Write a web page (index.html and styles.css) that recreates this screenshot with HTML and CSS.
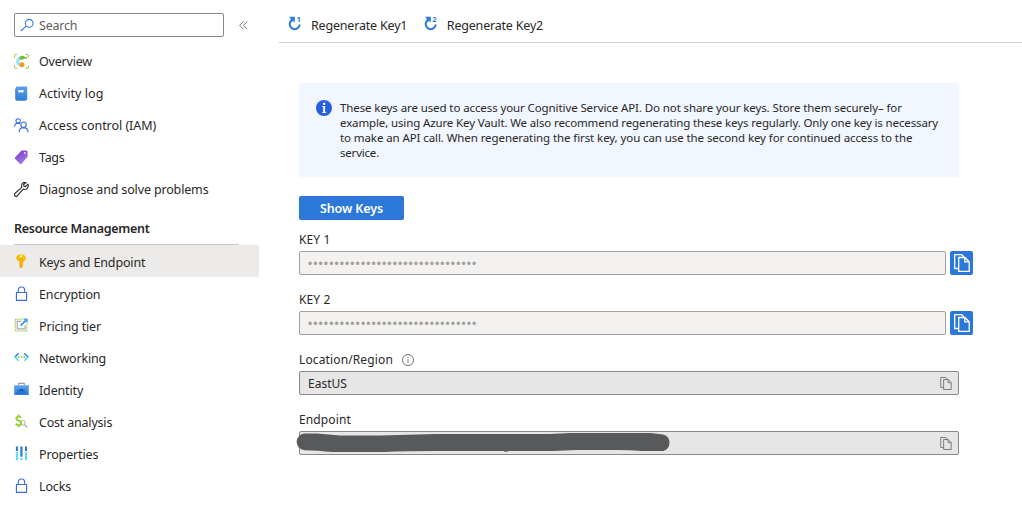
FILE: index.html
```html
<!DOCTYPE html>
<html lang="en">
<head>
<meta charset="utf-8">
<title>Keys and Endpoint</title>
<link rel="stylesheet" href="styles.css">
</head>
<body>
<svg width="0" height="0" class="defs">
  <defs>
    <linearGradient id="blue" x1="0" y1="0" x2="0" y2="1"><stop offset="0" stop-color="#5ea0ef"/><stop offset="1" stop-color="#2f80d8"/></linearGradient>
    <linearGradient id="purple" x1="0" y1="0" x2="0.6" y2="1"><stop offset="0" stop-color="#7434cc"/><stop offset="1" stop-color="#a67bdd"/></linearGradient>
    <linearGradient id="gold" x1="0" y1="0" x2="0" y2="1"><stop offset="0" stop-color="#f7c50c"/><stop offset="1" stop-color="#fba80c"/></linearGradient>
    <symbol id="copy" viewBox="0 0 16 18"><path d="M4.500 14.500H.7V.7h7l2.400 2.400M4.700 3.500h6.300l4.200 4.200v9.600H4.700zM10.800 3.700v4.200h4.200"/></symbol>
    <symbol id="lock" viewBox="0 0 16 16"><path d="M2.600 6.900h10.800v8.400H2.600zM4.600 6.700V4.500a3.400 3.400 0 0 1 6.800 0v2.200" fill="none" stroke="#3b6de0" stroke-width="1.200"/></symbol>
    <symbol id="regen" viewBox="0 0 14 16"><path d="M2.900 4.900A5 5 0 1 0 11.700 8.500" fill="none" stroke="#2b79d8" stroke-width="2"/><path d="M1 .8h5.800v5.600L5 4.900 3.300 6.300 1.900 4.700 3 2.900z" fill="#2b79d8"/></symbol>
  </defs>
</svg>
<div class="app">
  <nav class="sidebar">
    <div class="search-row">
      <div class="search">
        <svg width="14" height="14" viewBox="0 0 14 14"><path d="M6.100 8.200.8 13M5.300 5.300a3.900 3.900 0 1 1 7.800 0 3.900 3.900 0 0 1-7.800 0" fill="none" stroke="#3a7bd8" stroke-width="1.100"/></svg>
        <span class="t-search">Search</span>
      </div>
      <svg class="collapse" width="9" height="9" viewBox="0 0 9 9"><path d="M4.300.6.7 4.300l3.600 3.800M8.100.6 4.500 4.300l3.600 3.800" fill="none" stroke="#6b6967" stroke-width=".9"/></svg>
    </div>
    <ul class="menu">
      <li><svg viewBox="0 0 16 16"><path d="M.6 3.800V.6h3M12.400.6h3v3.200M.6 12v3.200h3M12.400 15.200h3V12" fill="none" stroke="#86c72b" stroke-width="1.100" stroke-dasharray="2.400 1"/><path d="M6.800 2.500C1.500 4 .9 10.300 4.500 12.700l2.800-1.400C5.300 9 5.600 6.300 8.300 5.500z" fill="#9be3fa"/><path d="M6 3.200Q9 .6 11.300 3l2.900.4-.2 1.500-2.700-.1Q9 7 6 5.300z" fill="#76bc2d"/><circle cx="8.400" cy="11.400" r="2.700" fill="#f5941e"/></svg><span class="t-overview">Overview</span></li>
      <li><svg viewBox="0 0 16 16"><path d="M3.200.5h9.900a1 1 0 0 1 1 1v12.700a1 1 0 0 1-1 1H3.200A1.400 1.400 0 0 1 1.800 14V2A1.500 1.500 0 0 1 3.200.5" fill="url(#blue)"/><path d="M1.800 3v11a1.300 1.300 0 0 0 1.200 1.200h9.500" fill="none" stroke="#286bc4" stroke-width=".8"/><path d="M4.500 4.400h5.700v2.400H4.500z" fill="#fff"/></svg><span class="t-activity">Activity log</span></li>
      <li><svg viewBox="0 0 16 16" fill="none" stroke="#3c72dc" stroke-width="1.200"><circle cx="4.400" cy="3.100" r="2.300"/><path d="M.6 9.200Q.8 5.600 4.400 5.500 6 5.500 6.700 6.700"/><circle cx="10.200" cy="7.200" r="2.900"/><path d="M5.300 15.300q.3-4.900 4.900-5 4.500.1 5 5"/></svg><span class="t-access">Access control (IAM)</span></li>
      <li><svg viewBox="0 0 16 16"><path d="M8 .4h5a1.500 1.500 0 0 1 1.500 1.500v5.300l-6.700 7.600a1 1 0 0 1-1.300 0L1.100 9.400a1 1 0 0 1 0-1.300z" fill="url(#purple)"/><circle cx="11.500" cy="3.100" r=".9" fill="#fff"/></svg><span class="t-tags">Tags</span></li>
      <li><svg viewBox="0 0 16 16"><path d="M14.900 2.300 12.300 4.900l-1.700-.5-.4-1.600L12.800.5C10.300-.1 7.900 1.600 8 4.200c0 .8.100 1 .3 1.500L.9 12.300c-1.400 1.500.9 4 2.500 2.600l6.500-7.200c2.900 1.200 6.400-2 5-5.400z" fill="none" stroke="#323130" stroke-width="1.250" stroke-linejoin="round"/></svg><span class="t-diagnose">Diagnose and solve problems</span></li>
    </ul>
    <h2 class="group"><span class="t-group">Resource Management</span></h2>
    <ul class="menu lower">
      <li class="selected"><svg viewBox="0 0 16 16"><path d="M7.500.2c3.200 0 5.100 1.700 5.100 4.100 0 1.800-1.100 3.100-2.600 3.700v1l-1 .9 1 1-1 1 .9 1-2.300 2.700-1.700-1.700V8C3.900 7.400 2.400 6.100 2.400 4.300 2.400 1.900 4.400.2 7.500.2" fill="url(#gold)"/><circle cx="7.500" cy="2.600" r="1.200" fill="#fff3bd"/><path d="M5 5.500h5M6.800 8.300v5" stroke="#e79207" stroke-width=".7"/></svg><span class="t-keys">Keys and Endpoint</span></li>
      <li><svg><use href="#lock"/></svg><span class="t-encryption">Encryption</span></li>
      <li><svg viewBox="0 0 16 16" fill="none"><path d="M1.300 1.500v12.300h12.400V5M1.300 1.300h8" stroke="#8fc63c" stroke-width="1.100" stroke-dasharray="1.400 .7"/><path d="M8 3.700H3.500v8h8.200V8" stroke="#aaa" stroke-width="1.300"/><path d="m7.100 8.100 5.500-5.500" stroke="#3b91e5" stroke-width="1.900"/><path d="M9.400.5h5.200v5.200z" fill="#4b9fed"/></svg><span class="t-pricing">Pricing tier</span></li>
      <li><svg viewBox="0 0 16 16" fill="none"><path d="M5 3.500.9 7.600" stroke="#3189df" stroke-width="1.700"/><path d="m.9 7.400 4.100 4.100" stroke="#50d8f2" stroke-width="1.700"/><path d="m11 3.500 4.100 4.100" stroke="#3189df" stroke-width="1.700"/><path d="M15.100 7.400 11 11.500" stroke="#50d8f2" stroke-width="1.700"/><g fill="#7abb2c"><circle cx="5" cy="7.500" r=".9"/><circle cx="8" cy="7.500" r=".9"/><circle cx="11" cy="7.500" r=".9"/></g></svg><span class="t-network">Networking</span></li>
      <li><svg viewBox="0 0 16 16"><path d="M5 3.600V1.400h6v2.200" fill="none" stroke="#9b9b9b" stroke-width="1.200"/><path d="M.2 3.500h15.600v10.400H.2z" fill="url(#blue)"/><path d="M2.500 8.200h11l-1.500 2.300 2 2.400H2l2-2.400z" fill="#2876d3"/><path d="M6 7.700h4v1.600H6z" fill="#194f94"/></svg><span class="t-identity">Identity</span></li>
      <li><svg viewBox="0 0 16 16" fill="none"><circle cx="9.300" cy="9.400" r="2.500" stroke="#bbb" stroke-width="1.100"/><path d="m11.200 11.300 3 3.200" stroke="#bbb" stroke-width="1.600"/><path d="M7.700 4Q6.600 2.600 4.800 2.800 2.400 3 2.500 5q.1 1.400 2.600 2.100 2.600.7 2.600 2.600 0 2.200-2.800 2.200-1.800 0-3-1.400M5 .4V3M5 11.700v2.500" stroke="#8fd12a" stroke-width="2"/></svg><span class="t-cost">Cost analysis</span></li>
      <li><svg viewBox="0 0 16 16"><path d="M2 .4h2.200v5H2zM6.800.4h2.300v11H6.800zM11.700.4h2.200v5h-2.200z" fill="#2b78d4"/><path d="M2 6.300h2.200v8.900H2zM6.800 12.800h2.300v2.400H6.800zM11.700 6.300h2.200v8.900h-2.200z" fill="#5bdcf2"/></svg><span class="t-props">Properties</span></li>
      <li><svg><use href="#lock"/></svg><span class="t-locks">Locks</span></li>
    </ul>
  </nav>
  <main class="main">
    <div class="toolbar">
      <div class="command"><span class="regen"><svg width="14" height="16"><use href="#regen"/></svg><b>1</b></span><span class="t-regen">Regenerate Key1</span></div>
      <div class="command"><span class="regen"><svg width="14" height="16"><use href="#regen"/></svg><b>2</b></span><span class="t-regen">Regenerate Key2</span></div>
    </div>
    <section class="content">
      <div class="notice">
        <svg width="16" height="16" viewBox="0 0 16 16"><circle cx="8" cy="8" r="8" fill="#2560e0"/><path d="M6.200 6.700h2.500M6.200 12.400h4" fill="none" stroke="#fff"/><path d="M7.200 6.300h1.900v6.500H7.200zM7.100 2.800h2.100v2.100H7.100z" fill="#fff"/></svg>
        <p><span class="l1">These keys are used to access your Cognitive Service API. Do not share your keys. Store them securely– for</span><span class="l2">example, using Azure Key Vault. We also recommend regenerating these keys regularly. Only one key is necessary</span><span class="l3">to make an API call. When regenerating the first key, you can use the second key for continued access to the</span><span class="l4">service.</span></p>
      </div>
      <div class="show"><span class="t-show">Show Keys</span></div>
      <div class="field"><div class="label"><span class="t-key">KEY 1</span></div>
        <div class="key-row"><div class="box secret"><span class="dots">••••••••••••••••••••••••••••••••</span></div><div class="copy-btn"><svg width="16" height="18"><use href="#copy"/></svg></div></div></div>
      <div class="field"><div class="label"><span class="t-key">KEY 2</span></div>
        <div class="key-row"><div class="box secret"><span class="dots">••••••••••••••••••••••••••••••••</span></div><div class="copy-btn"><svg width="16" height="18"><use href="#copy"/></svg></div></div></div>
      <div class="field"><div class="label"><span class="t-location">Location/Region</span><svg width="12" height="12" viewBox="0 0 12 12"><circle cx="6" cy="6" r="5.500" fill="none" stroke="#605e5c" stroke-width=".9"/><path d="M6 5v4M6 2.800v1.100" stroke="#8a8886"/></svg></div>
        <div class="box wide"><span class="t-east">EastUS</span><svg width="12" height="13"><use href="#copy"/></svg></div></div>
      <div class="field"><div class="label"><span class="t-endpoint">Endpoint</span></div>
        <div class="box wide"><svg class="redact" width="378" height="20" viewBox="0 0 378 20"><path d="M208 17.300h4v1.200h-4z" fill="#292827"/><path d="M9 .5h12q12 1 23 2h40Q112 1.500 140 1h113l22-1h80l12 1.500a8.500 8.500 0 0 1 0 16.500h-21q-12-1-25-1h-40l-24 1H140q-28 0-52 1H37Q21 17.500 9 17.200A8 8 0 0 1 9 .5z" fill="#58595b"/></svg><svg width="12" height="13"><use href="#copy"/></svg></div></div>
    </section>
  </main>
</div>
</body>
</html>
```
FILE: styles.css
```css
* { box-sizing: border-box; }
body { margin: 0; background: #fff; color: #292827; font: 12.5px/18px "Noto Sans", "Open Sans", sans-serif; overflow: hidden; }
.defs { display: block; }
.app { display: flex; width: 1022px; height: 505px; }
.sidebar { width: 259px; flex: none; padding-top: 13px; }
.sidebar span, .main span { white-space: nowrap; }
.sidebar span, .t-regen, .t-show { padding-top: 2px; }
.search-row { display: flex; align-items: center; height: 24px; margin: 0 0 8px 14px; }
.search { display: flex; align-items: center; width: 210px; height: 24px; border: 1px solid #8a8886; border-radius: 2px; padding-left: 5px; gap: 5px; color: #605e5c; }
.collapse { margin-left: 15px; }
.menu { list-style: none; margin: 0; padding: 0; letter-spacing: -.15px; }
.menu li { display: flex; align-items: center; height: 32px; padding-left: 14px; gap: 10px; }
.lower li { padding-top: 1px; }
.menu svg { width: 15px; height: 15px; flex: none; }
.lower span { padding-top: 3px; }
.menu .selected { background: #edebe9; }
.t-search, .t-overview, .t-network, .t-cost { letter-spacing: -.2px; }
.t-activity { letter-spacing: .04px; }
.t-access { letter-spacing: -.04px; }
.t-tags { letter-spacing: -.3px; }
.t-group { letter-spacing: -.29px; }
.t-regen { letter-spacing: -.19px; }
.t-show { letter-spacing: -.1px; }
.t-key { letter-spacing: .1px; }
.t-location, .t-endpoint { letter-spacing: .13px; }
.group { display: flex; align-items: flex-start; font-size: 12.5px; font-weight: 600; margin: 0 20px 0 14px; height: 40px; padding-top: 13px; border-bottom: 1px solid #c8c6c4; }
.main { flex: 1; }
.toolbar { display: flex; height: 43px; margin-left: 20px; padding: 7px 0 0 9px; border-bottom: 1px solid #d2d0ce; align-items: center; gap: 16.5px; }
.command { display: flex; align-items: center; }
.regen { display: flex; position: relative; width: 23px; height: 18px; }
.regen b { position: absolute; left: 8.500px; top: 0; color: #2b79d8; font-size: 7.500px; line-height: 7px; }
.content { padding: 40px 0 0 40px; }
.notice { display: flex; width: 660px; height: 94px; padding: 17px 0 0 17px; gap: 8px; background: #f1f6ff; border-radius: 2px; }
.notice svg { flex: none; }
.notice p { margin: 0; font-size: 11.5px; line-height: 15px; }
.notice p span { display: block; width: max-content; }
.l1 { letter-spacing: -.1px; }
.l2 { letter-spacing: -.13px; }
.l3 { letter-spacing: -.09px; }
.l4 { letter-spacing: -.2px; }
.show { display: flex; align-items: center; justify-content: center; width: 105px; height: 24px; margin: 19px 0 10px; background: #2b78d8; border-radius: 2px; color: #fff; font-weight: 600; }
.field { height: 60px; }
.label { display: flex; align-items: center; height: 21px; padding-bottom: 2px; gap: 9px; font-size: 12px; }
.key-row { display: flex; gap: 4px; }
.box { display: flex; align-items: center; position: relative; height: 24px; padding: 1px 6px 0 8px; border: 1px solid #8a8886; border-radius: 2px; background: #e6e6e6; font-size: 12px; }
.box svg:last-child { margin-left: auto; stroke: #6f6d6b; stroke-width: 1.2; fill: none; }
.secret { width: 647px; border-color: #a19f9d; background: #f3f2f1; color: #a19f9d; }
.wide { width: 660px; }
.copy-btn { display: flex; align-items: center; justify-content: center; width: 23px; height: 24px; border-radius: 2px; background: #2b78d8; stroke: #fff; stroke-width: 1.3; fill: none; }
.redact { position: absolute; left: -4px; top: .5px; }
.dots { font-family: "Liberation Sans", sans-serif; letter-spacing: 1.09px; }
```
